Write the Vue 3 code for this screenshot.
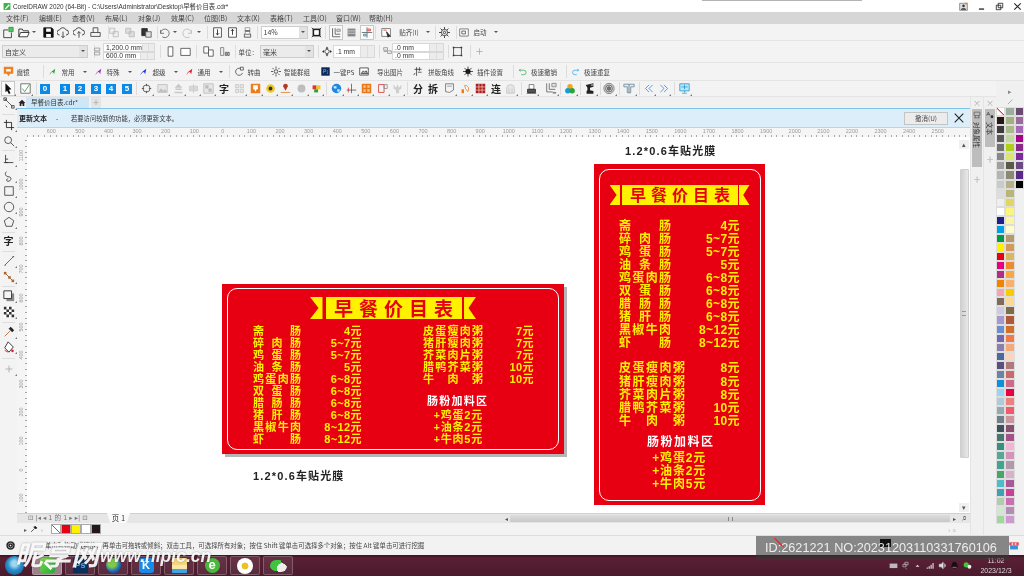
<template>
  <div class="app">
    <div class="titlebar">
      <svg class="logo" viewBox="0 0 14 14"><path d="M1 1h12v12H1z" fill="#3fb04a" /><path d="M3 11l7-8 2 2-7 7z" fill="#fff" /></svg>
      <span class="title">CorelDRAW 2020 (64-Bit) - C:\Users\Administrator\Desktop\早餐价目表.cdr*</span>
      <div class="winbtns">
        <svg viewBox="0 0 14 14"><path d="M1 2h12v11H1z" fill="#ddd" stroke="#666" /><path d="M7 4a2 2 0 1 0 .1 0M3 12c0-3 8-3 8 0" fill="#333" /><path d="M10 1h3v3h-3z" fill="#f08030" /></svg>
        <svg viewBox="0 0 14 14"><path d="M3 11h8" stroke="#222" stroke-width="2" /></svg>
        <svg viewBox="0 0 14 14"><path d="M5 2h7v7h-7zM2 5h7v7H2z" stroke="#222" stroke-width="1.3" fill="none" /></svg>
        <svg viewBox="0 0 14 14"><path d="M2 2l10 10M12 2L2 12" stroke="#222" stroke-width="1.6" /></svg>
      </div>
    </div>
    <div class="menubar">
      <span v-for="m in menus" :key="m">{{ m }}</span>
    </div>

    <div v-for="bar in topBars" :key="bar.id" class="toolbar" :class="bar.id">
      <template v-for="(it, idx) in bar.items" :key="idx">
        <i v-if="it.k === 's'" class="sep" :style="boxStyle(it)"></i>
        <span v-else-if="it.k === 'a'" class="arrow" :style="boxStyle(it)"></span>
        <span v-else-if="it.k === 't'" class="tbtext" :style="boxStyle(it)">{{ it.t }}</span>
        <span v-else-if="it.k === 'c'" class="combo" :class="{ white: it.white }" :style="boxStyle(it)">
          <em>{{ it.t }}</em><b></b>
        </span>
        <span v-else-if="it.k === 'f'" class="fields" :style="boxStyle(it)">
          <span v-for="v in it.vals" :key="v" class="field">
            <em>{{ v }}</em><b></b><b></b>
          </span>
        </span>
        <span v-else class="ico" :class="{ boxed: it.boxed }" :style="boxStyle(it)">
          <svg viewBox="0 0 14 14"><path v-for="(p, n) in icons[it.n]" :key="n" :d="p[0]" :stroke="p[1] || '#333'" :fill="p[2] || 'none'" /></svg>
        </span>
      </template>
    </div>

    <div class="workspace">
      <div class="leftpart">
        <div class="toolbar row4">
          <template v-for="(it, idx) in row4" :key="idx">
            <i v-if="it.k === 's'" class="sep" :style="boxStyle(it)"></i>
            <span v-else-if="it.k === 'n'" class="numkey" :style="boxStyle(it)">{{ it.t }}</span>
            <span v-else-if="it.k === 'g'" class="glyph" :style="boxStyle(it)">{{ it.t }}</span>
            <span v-else class="ico mark" :class="{ boxed: it.boxed }" :style="boxStyle(it)">
              <svg viewBox="0 0 14 14"><path v-for="(p, n) in icons[it.n]" :key="n" :d="p[0]" :stroke="p[1] || '#333'" :fill="p[2] || 'none'" /></svg>
            </span>
          </template>
        </div>
        <div class="midrow">
          <div class="toolbox">
            <template v-for="(it, idx) in toolbox" :key="idx">
              <i v-if="it.k === 's'" class="hsep" :style="vStyle(it)"></i>
              <span v-else-if="it.k === 'g'" class="glyph" :style="vStyle(it)">{{ it.t }}</span>
              <span v-else class="ico mark" :style="vStyle(it)">
                <svg viewBox="0 0 14 14"><path v-for="(p, n) in icons[it.n]" :key="n" :d="p[0]" :stroke="p[1] || '#333'" :fill="p[2] || 'none'" /></svg>
              </span>
            </template>
          </div>
          <div class="docarea">
            <div class="tabstrip">
              <svg class="home" viewBox="0 0 14 14"><path d="M7 2L1 8h2v5h3V9h2v4h3V8h2z" fill="#222" /></svg>
              <span class="doctab">早餐价目表.cdr*</span>
              <span class="addtab">+</span>
            </div>
            <div class="updatebar">
              <b>更新文本</b><span class="dash">-</span><span>若要访问较新的功能，必须更新文本。</span>
              <button class="cancel">撤消(U)</button>
              <svg class="closex" viewBox="0 0 14 14"><path d="M2 2l10 10M12 2L2 12" stroke="#222" stroke-width="1.3" /></svg>
            </div>
            <div class="hruler">
              <span v-for="(n, i) in hLabels" :key="i">{{ n }}</span>
            </div>
            <div class="canvasrow">
              <div class="vruler">
                <span v-for="(n, i) in vLabels" :key="i">{{ n }}</span>
              </div>
              <div class="canvas">
                <div class="label label1">1.2*0.6车贴光膜</div>
                <div class="label label2">1.2*0.6车贴光膜</div>

                <div class="board wide">
                  <div class="frame"></div>
                  <div class="banner">
                    <i class="rib left"></i><strong>早餐价目表</strong><i class="rib right"></i>
                  </div>
                  <div class="cols">
                    <div class="col first">
                      <div v-for="r in sausage" :key="r[0]" class="line"><span class="nm">{{ r[0] }}</span><span>{{ r[1] }}</span></div>
                    </div>
                    <div class="col second">
                      <div v-for="r in porridgeWide" :key="r[0]" class="line"><span class="nm">{{ r[0] }}</span><span>{{ r[1] }}</span></div>
                      <div class="extra-title">肠粉加料区</div>
                      <div v-for="e in extras" :key="e" class="extra">{{ e }}</div>
                    </div>
                  </div>
                </div>

                <div class="board tall">
                  <div class="frame"></div>
                  <div class="banner">
                    <i class="rib left"></i><strong>早餐价目表</strong><i class="rib right"></i>
                  </div>
                  <div class="list">
                    <div v-for="r in sausage" :key="r[0]" class="line"><span class="nm">{{ r[0] }}</span><span>{{ r[1] }}</span></div>
                  </div>
                  <div class="list second">
                    <div v-for="r in porridgeTall" :key="r[0]" class="line"><span class="nm">{{ r[0] }}</span><span>{{ r[1] }}</span></div>
                  </div>
                  <div class="extra-title">肠粉加料区</div>
                  <div v-for="e in extras" :key="e" class="extra">{{ e }}</div>
                </div>
              </div>
              <div class="vscroll">
                <span class="sbtn">▴</span>
                <div class="vthumb"><i></i></div>
                <span class="sbtn">▾</span>
              </div>
            </div>
            <div class="pagerow">
              <span class="pagenav">⊡ |◂ ◂ 1 的 1 ▸ ▸| ⊡</span>
              <span class="pagetab">页 1</span>
              <div class="hscroll"><span class="sarrow">◂</span><div class="hthumb"><i></i></div><span class="sarrow">▸</span><span class="mag">⌕</span></div>
            </div>
            <div class="colorrow">
              <span class="cr-arrow">▸</span>
              <svg viewBox="0 0 14 14"><path d="M2 12l6-6M7 3l4 4M9 2l3 3-2 2-3-3z" stroke="#333" stroke-width="1.4" /></svg>
              <span class="cr-left">‹</span>
              <i class="swatch none"></i>
              <i v-for="c in docColors" :key="c" class="swatch" :style="{ background: c }"></i>
              <span class="cr-right">› »</span>
            </div>
          </div>
          <div class="dockers">
            <div class="dockcol">
              <span class="dx">×</span>
              <div class="docktab one">
                <svg viewBox="0 0 14 14"><path d="M2 2h10v6H2zM4 8v4M10 8v4M2 12h10" stroke="#444" fill="none" /></svg>
                <span>对象属性</span>
              </div>
              <span class="dplus">+</span>
            </div>
            <div class="dockcol">
              <span class="dx">×</span>
              <div class="docktab two">
                <svg viewBox="0 0 14 14"><path d="M1 8l3-6 3 6M2 6h4" stroke="#333" fill="none" /><path d="M8 10a2.500 2.500 0 1 0 5 0a2.500 2.500 0 1 0-5 0" fill="#333" /></svg>
                <span>文本</span>
              </div>
              <span class="dplus">+</span>
            </div>
          </div>
        </div>
      </div>
      <div class="palette">
        <div class="palhead">
          <span>▸</span>
          <svg viewBox="0 0 14 14"><path d="M3 11l7-7" stroke="#aaa" stroke-width="1.5" /></svg>
        </div>
        <div class="palcols">
          <div v-for="(col, i) in paletteCols" :key="i" class="palcol">
            <i v-for="(c, j) in col" :key="j" :class="{ none: c === 'none' }" :style="c === 'none' ? {} : { background: c }"></i>
          </div>
        </div>
      </div>
    </div>

    <div class="statusbar">
      <svg class="gear" viewBox="0 0 14 14"><path d="M7 2.500a4.500 4.500 0 1 0 .1 0M7 5a2 2 0 1 0 .1 0" stroke="#222" stroke-width="2" fill="none" /></svg>
      <span class="tip">单击可拖动或缩放；再单击可拖转或倾斜；双击工具，可选择所有对象；按住 Shift 键单击可选择多个对象；按住 Alt 键单击可进行挖掘</span>
    </div>

    <div class="taskbar">
      <span class="orb"></span>
      <span v-for="t in taskApps" :key="t.id" class="tbtn" :class="{ active: t.active }">
        <span class="app-ico" :class="t.id">{{ t.t }}</span>
      </span>
      <div class="tray">
        <svg viewBox="0 0 14 14"><path d="M1 4h12v7H1z" fill="#bbb" /></svg>
        <svg viewBox="0 0 14 14"><path d="M6 2h5v4H6zM3 5h5v4H3z" stroke="#ccc" fill="none" /><path d="M6 12l2 1 2-1z" fill="#ddd" /></svg>
        <svg viewBox="0 0 14 14"><path d="M4 9l3-3 3 3z" fill="#ddd" /></svg>
        <svg viewBox="0 0 14 14"><path d="M1 12h2v-2H1zM4 12h2V8H4zM7 12h2V6H7zM10 12h2V3h-2z" fill="#ccc" /></svg>
        <svg viewBox="0 0 14 14"><path d="M2 5h3l3-3v10L5 9H2zM10 4c2 2 2 4 0 6" fill="#ddd" stroke="#ddd" /></svg>
        <svg viewBox="0 0 14 14"><path d="M7 1c-3 0-4 2-4 5l-2 4 2-1c1 2 2 3 4 3s3-1 4-3l2 1-2-4c0-3-1-5-4-5z" fill="#111" /><path d="M4 9h6v2H4z" fill="#e33" /></svg>
        <svg viewBox="0 0 14 14"><path d="M1 6a4 4 0 1 1 8 0a4 4 0 1 1-8 0" fill="#3ec43e" /><path d="M7 9a3 3 0 1 1 6 0a3 3 0 1 1-6 0" fill="#eee" /></svg>
        <span class="clock"><span>11:02</span><span>2023/12/3</span></span>
      </div>
    </div>

    <div class="wm">
      <span class="wm-cn">昵享网</span><span class="wm-en">www.nipic.cn</span>
    </div>
    <div class="idbox">
      <i class="none-chip"></i>
      <i class="black-chip"></i>
      <span class="id-text">ID:2621221 NO:20231203110331760106</span>
    </div>
    <svg class="redblue" viewBox="0 0 14 14"><path d="M1 3h12v4H1z" fill="#e0485a" /><path d="M2 7h10v5H2z" fill="#3a8fd8" /><path d="M4 4h2v2H4zM8 4h2v2H8z" fill="#fff" /></svg>
    <i class="topshadow"></i>
  </div>
</template>

<script setup>
const menus = ['文件(F)', '编辑(E)', '查看(V)', '布局(L)', '对象(J)', '效果(C)', '位图(B)', '文本(X)', '表格(T)', '工具(O)', '窗口(W)', '帮助(H)']

const circle = (x, y, r) => `M${x - r} ${y}a${r} ${r} 0 1 0 ${2 * r} 0a${r} ${r} 0 1 0 ${-2 * r} 0`

const icons = {
  new: [['M2 4v9h9V7M2 4h5'], ['M8 1h5v5H8z', '#2a9d3a', '#57c05f']],
  open: [['M1 12V3h4l1 2h6v2', '#222'], ['M1 12l2-5h10l-2 5z', '#222', '#fff']],
  save: [['M1 1h10l2 2v10H1z', '#111', '#111'], ['M4 2h6v4H4zM4 9h6v4H4z', 'none', '#fff']],
  cloudDown: [['M3 10a3 3 0 0 1 0-6a4 4 0 0 1 7.500 0a3 3 0 0 1 0 6'], ['M7 6v7M5 11l2 2 2-2']],
  cloudUp: [['M3 10a3 3 0 0 1 0-6a4 4 0 0 1 7.500 0a3 3 0 0 1 0 6'], ['M7 13V6M5 8l2-2 2 2']],
  print: [['M4 7V1h6v6M1 7h12v5H1z']],
  gc1: [['M2 2h6v6H2zM6 6h6v6H6z', '#bbb', '#eee']],
  gc2: [['M2 2h6v6H2zM6 6h6v6H6z', '#bbb', '#ddd']],
  paste: [['M1 2h7v9H1z', '#222', '#333'], ['M6 6h7v7H6z', '#555', '#ddd']],
  undo: [['M3 4v4h4', '#666'], ['M3 8a5 5 0 1 1 2 4', '#666']],
  redo: [['M11 4v4H7', '#bbb'], ['M11 8a5 5 0 1 0-2 4', '#bbb']],
  imp: [['M2 1h10v12H2z', '#333', '#fff'], ['M7 3v7M5 8l2 2 2-2', '#111']],
  exp: [['M2 1h10v12H2z', '#333', '#fff'], ['M7 10V3M5 5l2-2 2 2', '#111']],
  pdf: [['M3 9h8v4H3z', '#444', '#eee'], ['M4 1h6v8H4z', '#888', '#fff'], ['M4 4h6v2H4z', 'none', '#555']],
  fit: [['M2 2h10v10H2z', 'none', '#222'], ['M4 4h6v6H4z', 'none', '#fff'], ['M1 1l3 3M13 1l-3 3M1 13l3-3M13 13l-3-3', '#222']],
  snapL: [['M3 2v10h9M6 2v7h6', '#555'], ['M8 3h4v3H8z', '#999', '#ccc']],
  snapM: [['M2 2h10v10H2z', 'none', '#888'], ['M2 5h10M2 8h10', '#ddd']],
  snapC: [['M7 1v12M1 7h12', '#666'], ['M8 3h3v2H8z', '#d33'], ['M3 9h3v2H3z', '#38a']],
  snapT: [['M1 2h11v10H1z', '#666', '#fff'], ['M7 6l5 6-2-1-1 2z', '#222', '#222'], ['M3 4h4', '#d33']],
  gear: [[circle(7, 7, 4), '#222'], [circle(7, 7, 1.5), '#222'], ['M7 0v3M7 11v3M0 7h3M11 7h3M2 2l2 2M12 2l-2 2M2 12l2-2M12 12l-2-2', '#222']],
  start: [['M1 2h12v10H1z', '#555', '#fff'], ['M4 5h5v4H4z', '#333']],
  wh: [['M1 1h9v5H1z', '#777', '#eee'], ['M1 8h9v5H1z', '#777', '#eee']],
  portrait: [['M4 1h6v12H4z', '#444', '#fff']],
  landscape: [['M1 3h12v9H1z', '#444', '#fff']],
  pgAll: [['M1 1h6v8H1z', '#444', '#fff'], ['M7 5h6v8H7z', '#444', '#fff']],
  pgCur: [['M2 2h4v10H2z', '#777', '#eee'], ['M8 8h2v4H8zM11 8h2v4h-2z', '#555', '#ddd']],
  nudge: [[circle(7, 7, 3), '#333'], ['M7 0l2 3H5zM7 14l2-3H5zM0 7l3 2V5zM14 7l-3 2V5z', 'none', '#333']],
  dup: [['M1 1h6v4H1z', '#777'], ['M7 6h6v4H7z', '#777'], ['M1 7h5', '#777']],
  frame: [['M2 2h10v10H2z', '#333'], ['M1 1h2v2H1zM11 1h2v2h-2zM1 11h2v2H1zM11 11h2v2h-2z', 'none', '#333']],
  plus: [['M7 3v8M3 7h8', '#aaa']],
  magic: [['M1 1h12v9H9l-2 3-2-3H1z', 'none', '#f08020'], ['M4 4h6v3H4z', 'none', '#fff']],
  rGreen: [['M2 9l9-7-2 10-2-4z', 'none', '#2aa43c'], ['M1 12l3-3', '#2aa43c']],
  rPurple: [['M2 9l9-7-2 10-2-4z', 'none', '#a030c8'], ['M1 12l3-3', '#a030c8']],
  rBlue: [['M2 9l9-7-2 10-2-4z', 'none', '#1a3ad8'], ['M1 12l3-3', '#1a3ad8']],
  rRed: [['M2 9l9-7-2 10-2-4z', 'none', '#e01a2a'], ['M1 12l3-3', '#e01a2a']],
  curve: [['M11 4a5 5 0 1 0 1 5'], ['M9 1h4v4H9z', '#333', '#fff']],
  spark: [[circle(7, 7, 2.5), '#222'], ['M7 0v3M7 11v3M0 7h3M11 7h3M2 2l2 2M12 2l-2 2M2 12l2-2M12 12l-2-2', '#222']],
  ps: [['M1 1h12v12H1z', '#0a2a5a', '#0a2a5a'], ['M4 10V4h3v3H4M9 6h2M9 8h2M9 10h2', '#5ab0ee']],
  picOut: [['M1 2h12v10H1z', '#222', '#fff'], ['M3 10l3-4 2 2 2-2 2 4z', '#222', '#bbb']],
  cornerCut: [['M5 1v12M2 4h10M9 1v5M7 8h5', '#222'], ['M3 9l-2 3', '#222']],
  gearB: [[circle(7, 7, 3.2), '#111', '#111'], [circle(7, 7, 1.2), 'none', '#fff'], ['M7 0v14M0 7h14M2 2l10 10M12 2L2 12', '#111']],
  undoG: [['M4 3L2 5l2 2M2 5h7a3 3 0 0 1 0 7H5', '#23a03a']],
  redoB: [['M10 3l2 2-2 2M12 5H6a3 3 0 0 0 0 7h3', '#1e9ae8']],
  sel: [['M4 1l7 7-3 .500 2 4-2 1-2-4-2 2z', 'none', '#111']],
  check: [['M1 1h12v12H1z', '#555', '#fff'], ['M3 7l3 4 6-9', '#1ea03a']],
  ring: [[circle(7, 7, 4.5), '#444'], ['M7 1v3M7 10v3M1 7h3M10 7h3', '#444']],
  greyImg: [['M1 2h12v10H1z', '#bbb', '#e6e6e6'], ['M2 11l3-4 3 3 2-2 3 3z', 'none', '#bbb']],
  greyA: [['M7 1l5 5H2zM3 7h8v2H3zM2 11h10v2H2z', 'none', '#c8c8c8']],
  greyB: [['M2 4h10v6H2zM7 1v12', '#c8c8c8', '#d8d8d8']],
  greyC: [['M1 1h12v12H1z', '#bbb', '#e6e6e6'], ['M3 3h4v4H3zM7 7h4v4H7z', 'none', '#bbb']],
  greyD: [['M2 2h4v4H2zM8 2h4v4H8zM2 8h4v4H2zM8 8h4v4H8z', '#c4c4c4', '#e8e8e8']],
  orange: [['M1 1h12v12H1z', 'none', '#ef7d1a'], ['M4 3h6v5H8.500L7 11 5.500 8H4z', 'none', '#fff']],
  eye: [[circle(7, 7, 5.5), 'none', '#f0c81a'], [circle(7, 7, 2.5), 'none', '#333']],
  under: [['M7 1a3 3 0 0 1 3 3l-3 6-3-6a3 3 0 0 1 3-3z', 'none', '#b03a2a'], ['M1 12h12', '#e8781a']],
  greyDot: [[circle(7, 7, 5), 'none', '#bdbdbd']],
  multi: [['M2 3h5v5H2z', 'none', '#e0342a'], ['M7 3h5v5H7z', 'none', '#f0c81a'], ['M4 8h5v4H4z', 'none', '#2aa43c']],
  globe: [[circle(7, 7, 6), 'none', '#1e88e0'], ['M3 4h4v3H4zM8 8h3v3H8z', 'none', '#cfeaff']],
  cross: [['M7 1v12M1 9h12', '#555'], ['M3 6v6', '#d33']],
  pattern: [['M1 1h12v12H1z', 'none', '#e8761a'], ['M3 3h3v3H3zM8 3h3v3H8zM3 8h3v3H3zM8 8h3v3H8z', 'none', '#f8c090']],
  redCorner: [['M2 2h7v10H2z', '#d33'], ['M9 2h4v5H9z', '#888']],
  greyCrown: [['M2 2l3 4 2-4 2 4 3-4v5l-3 2v4H5V9L2 7z', 'none', '#cfcfcf']],
  doc: [['M2 1h10v8l-5 3-5-1z', '#666', '#f4f4f4'], ['M4 4h6', '#888']],
  peel: [['M2 8h3v5H2z', 'none', '#e8761a'], ['M6 3c4 0 6 3 4 8l-3-4z', '#e8761a', '#fff']],
  redGrid: [['M1 1h12v12H1z', 'none', '#a81c1c'], ['M5 1v12M9 1v12M1 5h12M1 9h12', '#f3c0b8']],
  greyArch: [['M2 13V7a5 5 0 0 1 10 0v6zM5 13V7M9 13V7', '#c4c4c4', '#e6e6e6']],
  printer: [['M4 2h6v6H4z', '#666', '#fff'], ['M2 8h10v4H2z', '#222', '#555'], ['M1 13h12', '#222']],
  ell: [['M2 1v10h7M5 1v7h7', '#666'], ['M8 1h5v4H8z', '#888', '#ddd'], ['M9 11h4v2H9z', 'none', '#888']],
  tri: [[circle(7, 5, 3.2), 'none', '#f0a81a'], [circle(4.5, 9.5, 3.2), 'none', '#1e98d8'], [circle(9.5, 9.5, 3.2), 'none', '#2aa43c']],
  anvil: [['M2 3l9-2v4L7 6v3l4 1v3H3v-3l1-1V6z', 'none', '#222'], ['M8 3h3', '#fff']],
  target: [[circle(7, 7, 6), '#777', '#ddd'], [circle(7, 7, 4), '#555'], [circle(7, 7, 2), '#555', '#777']],
  tee: [['M1 2h12v3H9v7H5V5H1z', '#6a8a9a', '#e8eef0'], ['M7 2v10', '#5a7a8a']],
  prev: [['M7 2L2 7l5 5M12 2L7 7l5 5', '#1e78e8']],
  next: [['M2 2l5 5-5 5M7 2l5 5-5 5', '#1e78e8']],
  monitor: [['M1 1h12v9H1z', '#1e98d8', '#bfe6f8'], ['M7 10v2M4 13h6M3 5h8M7 2v6', '#1e98d8']],
  shape: [['M2 2l9 9', '#444'], ['M1 1h3v3H1zM10 10h3v3h-3zM3 10l2 2', '#444']],
  crop: [['M4 1v9h9M1 4h9v9', '#222']],
  zoom: [[circle(6, 6, 4), '#444'], ['M9 9l4 4', '#444']],
  free: [['M3 1v9h9', '#333'], ['M1 10h5M3 6h3', '#333']],
  spiral: [['M4 2c-3 3 0 6 3 6s3 4 0 5-4-2-1-3', '#333']],
  rect: [['M2 2h10v10H2z', '#444']],
  ellipse: [[circle(7, 7, 5.5), '#444']],
  poly: [['M7 1.500l5.500 4-2 6.500h-7l-2-6.500z', '#444']],
  line: [['M2 12L12 2', '#555'], ['M2 12h1M11 2h2', '#333']],
  conn: [['M2 2l10 10', '#664'], ['M1 1h3v3H1z', 'none', '#b5622a'], ['M6 6h3v3H6z', 'none', '#b5622a'], ['M10 10h3v3h-3z', 'none', '#b5622a']],
  shadow: [['M4 4h9v9H4z', 'none', '#888'], ['M1 1h9v9H1z', '#222', '#f4f4f4']],
  check2: [['M1 1h12v12H1z', 'none', '#fff'], ['M1 1h3v3H1zM7 1h3v3H7zM4 4h3v3H4zM10 4h3v3h-3zM1 7h3v3H1zM7 7h3v3H7zM4 10h3v3H4zM10 10h3v3h-3z', 'none', '#333']],
  dropper: [['M2 12l6-6', '#b5622a'], ['M7 3l4 4', '#222'], ['M9 1l4 4-2 2-4-4z', 'none', '#222']],
  fill: [['M6 1l6 6-5 6-5-5z', '#222', '#fff'], ['M2 11l4 2', '#e01a2a'], ['M11 10a1.500 1.500 0 1 0 .1 0', 'none', '#e01a2a']]
}

const I = (n, x, w = 12, boxed = false) => ({ k: 'i', n, x, w, boxed })
const S = x => ({ k: 's', x, w: 1 })
const A = x => ({ k: 'a', x, w: 7 })
const T = (t, x, w) => ({ k: 't', t, x, w })
const C = (t, x, w, white = false) => ({ k: 'c', t, x, w, white })
const F = (vals, x, w) => ({ k: 'f', vals, x, w })
const N = (t, x) => ({ k: 'n', t, x, w: 10 })
const G = (t, x, w = 14) => ({ k: 'g', t, x, w })

// turn absolute centres into flow margins
const flow = list => {
  let right = 0
  return list.map(it => {
    const l = it.x - it.w / 2
    const out = { ...it, ml: l - right }
    right = l + it.w
    return out
  })
}

const topBars = [
  {
    id: 'row1',
    items: flow([
      I('new', 8), I('open', 24), A(34), I('save', 48, 11), I('cloudDown', 63), I('cloudUp', 79), I('print', 95, 11), S(108),
      I('gc1', 114), I('gc2', 130), I('paste', 146, 11), S(157), I('undo', 164), A(175), I('redo', 188), A(199), S(207),
      I('imp', 217, 11), I('exp', 232, 11), I('pdf', 247, 11), S(257), C('14%', 284, 47, true), I('fit', 316, 11), S(325),
      I('snapL', 336, 12, true), I('snapM', 351, 11), I('snapC', 367, 12, true), S(375), I('snapT', 386, 11), T('贴齐(I)', 409, 24), A(428), S(435),
      I('gear', 444, 11), S(456), I('start', 464, 10), T('启动', 480, 15), A(496)
    ])
  },
  {
    id: 'row2',
    items: flow([
      C('自定义', 45, 86), S(94), I('wh', 98, 8), F(['1,200.0 mm', '600.0 mm'], 129, 52), S(160), I('portrait', 170, 11), I('landscape', 185, 11), S(196),
      I('pgAll', 208, 11), I('pgCur', 224, 11), S(235), T('单位：', 248, 19), C('毫米', 287, 54), S(318), I('nudge', 327, 10), F(['.1 mm'], 354, 42), S(379),
      I('dup', 387, 9), F(['.0 mm', '.0 mm'], 418, 52), S(448), I('frame', 457, 11), S(470), I('plus', 479, 11)
    ])
  },
  {
    id: 'row3',
    items: flow([
      I('magic', 8, 11), T('魔镜', 23, 15), S(43), I('rGreen', 53, 8), T('常用', 68, 15), A(85), I('rPurple', 99, 8), T('特殊', 113, 15), A(130),
      I('rBlue', 144, 8), T('超级', 159, 15), A(176), I('rRed', 190, 8), T('通用', 204, 15), A(221), S(229),
      I('curve', 239, 10), T('转曲', 254, 15), I('spark', 276, 10), T('智能群组', 297, 28), I('ps', 325, 9), T('一键PS', 344, 22),
      I('picOut', 364, 10), T('导出图片', 390, 28), I('cornerCut', 418, 10), T('拼版角线', 441, 28), I('gearB', 468, 10), T('插件设置', 490, 28), S(513),
      I('undoG', 522, 9), T('极速撤销', 544, 28), S(566), I('redoB', 575, 9), T('极速重复', 597, 28)
    ])
  }
]

const row4 = flow([
  I('sel', 8, 12, true), I('check', 25, 11), S(36), N('0', 45), N('1', 65), N('2', 80), N('3', 96), N('4', 111), N('5', 127), S(136),
  I('ring', 146, 11), I('greyImg', 162, 11), I('greyA', 178, 11), I('greyB', 193, 11), I('greyC', 208, 11), G('字', 224), I('greyD', 239, 11),
  I('orange', 255, 11), I('eye', 270, 11), I('under', 285, 11), I('greyDot', 301, 11), I('multi', 316, 11), S(326), I('globe', 336, 11), I('cross', 351, 11),
  I('pattern', 366, 11), I('redCorner', 382, 11), I('greyCrown', 397, 11), S(407), G('分', 418), G('拆', 433), I('doc', 449, 11), I('peel', 465, 11),
  I('redGrid', 480, 11), G('连', 496), I('greyArch', 510, 11), S(521), I('printer', 531, 11), I('ell', 551, 12), S(560), I('tri', 570, 12), S(580), I('anvil', 590, 12), S(600),
  I('target', 609, 12), S(619), I('tee', 629, 12), S(639), I('prev', 649, 10), I('next', 664, 10), S(674), I('monitor', 684, 11)
])

const V = (n, y) => ({ n, y, h: 12 })
const VS = y => ({ k: 's', y, h: 1 })
const VG = (t, y) => ({ k: 'g', t, y, h: 14 })

const vflow = (list, start) => {
  let bottom = start
  return list.map(it => {
    const t = it.y - it.h / 2
    const out = { ...it, mt: t - bottom }
    bottom = t + it.h
    return out
  })
}

const toolbox = vflow([
  V('shape', 103), VS(114), V('crop', 125), V('zoom', 141), VS(150), V('free', 160), V('spiral', 176), V('rect', 191), V('ellipse', 207), V('poly', 222), VS(232),
  VG('字', 241), VS(251), V('line', 261), V('conn', 277), VS(286), V('shadow', 296), V('check2', 312), VS(322), V('dropper', 332), V('fill', 347), VS(358), V('plus', 369)
], 97)

const boxStyle = it => ({ width: it.w + 'px', marginLeft: it.ml + 'px' })
const vStyle = it => ({ height: it.h + 'px', marginTop: it.mt + 'px' })

const hLabels = ['600', '500', '400', '300', '200', '100', '0']
for (let i = 100; i <= 2500; i += 100) hLabels.push(String(i))
const vLabels = ['1100', '1000', '900', '800', '700', '600', '500', '400', '300', '200', '100', '0', '100']

const sausage = [
  ['斋肠', '4元'], ['碎肉肠', '5~7元'], ['鸡蛋肠', '5~7元'], ['油条肠', '5元'], ['鸡蛋肉肠', '6~8元'],
  ['双蛋肠', '6~8元'], ['腊肠肠', '6~8元'], ['猪肝肠', '6~8元'], ['黑椒牛肉', '8~12元'], ['虾肠', '8~12元']
]
const porridgeWide = [['皮蛋瘦肉粥', '7元'], ['猪肝瘦肉粥', '7元'], ['芥菜肉片粥', '7元'], ['腊鸭芥菜粥', '10元'], ['牛肉粥', '10元']]
const porridgeTall = [['皮蛋瘦肉粥', '8元'], ['猪肝瘦肉粥', '8元'], ['芥菜肉片粥', '8元'], ['腊鸭芥菜粥', '10元'], ['牛肉粥', '10元']]
const extras = ['+鸡蛋2元', '+油条2元', '+牛肉5元']

const docColors = ['#e60012', '#fff100', '#ffffff', '#231815']

const paletteCols = [
  ['none', '#231815', '#3e3a39', '#595757', '#727171', '#898989', '#9fa0a0', '#b5b5b6', '#c9caca', '#dcdddd', '#efefef', '#ffffff', '#1d2088', '#00a0e9', '#009944', '#fff100', '#e60012', '#e4007f', '#b22e86', '#f08300', '#f4a6b0', '#7f6b5c', '#cfc8e6', '#a399cf', '#6a8fd0', '#7367b0', '#8b7fae', '#4a6a9f', '#5b4f7b', '#6b84a6', '#0f90dc', '#99d3f5', '#aecbdc', '#93aab5', '#707f8a', '#3f4f5b', '#47766f', '#36907b', '#56a796', '#40a58f', '#47a56b', '#4dbdc9', '#3da3b3', '#b0cdb0', '#d0e8d0', '#a0d6a0'],
  ['#9bad9b', '#a3b07e', '#a8b98a', '#c3d69b', '#aed116', '#dbe66e', '#5a5a48', '#8a8a72', '#b5b08a', '#b8b47a', '#e0d660', '#fdf57a', '#fdf5a6', '#fffbd0', '#b59a70', '#d39a5c', '#d8b860', '#f08a30', '#f8a840', '#f8b06c', '#f8cc00', '#fad89a', '#7d6b4a', '#b0583a', '#d0702a', '#f07a48', '#f4a87c', '#fad4bc', '#b07878', '#cc6a6a', '#cc6a88', '#e60044', '#f08080', '#f05a6a', '#cc949c', '#885070', '#a85088', '#f4b4d4', '#d494b8', '#b09aa8', '#d8b0cc', '#a85a98', '#c84098', '#c870b0', '#b48cb8', '#cc9ad0'],
  ['#6a4a70', '#9a6a9a', '#a868b8', '#a8008a', '#8a2a88', '#7a2a9a', '#6a4a80', '#5a2a88', '#000000']
]

const taskApps = [
  { id: 'cdr', t: '', active: true },
  { id: 'psa', t: 'Ps' },
  { id: 'earth', t: '' },
  { id: 'kk', t: 'K' },
  { id: 'folder', t: '' },
  { id: 'ie', t: 'e' },
  { id: 'badge', t: '' },
  { id: 'wechat', t: '' }
]
</script>

<style>
html, body { margin: 0; padding: 0; background: #f3f3f3; overflow: hidden; }
</style>

<style scoped>
.app {
  width: 1024px;
  height: 576px;
  position: relative;
  overflow: hidden;
  display: flex;
  flex-direction: column;
  font-family: "Noto Sans CJK SC", "Liberation Sans", sans-serif;
  font-size: 7px;
  color: #444;
  background: #f3f3f3;
  filter: blur(.3px);
}
.titlebar {
  height: 12px;
  flex: none;
  background: #fff;
  display: flex;
  align-items: center;
  padding-left: 3px;
}
.logo { width: 8px; height: 9px; margin-right: 2px; }
.title { font-family: "Liberation Sans", "Noto Sans CJK SC", sans-serif; font-size: 6.400px; color: #333; }
.winbtns { margin-left: auto; display: flex; padding-right: 2px; }
.winbtns svg { width: 9px; height: 9px; margin-left: 9px; }
.menubar {
  height: 12px;
  flex: none;
  background: #d6d6d6;
  display: flex;
  align-items: center;
  padding-left: 6px;
  gap: 10.500px;
  color: #444;
  font-size: 7px;
}
.menubar span { width: 22.500px; white-space: nowrap; }
.toolbar {
  flex: none;
  display: flex;
  align-items: center;
  background: #f3f3f3;
  border-bottom: 1px solid #e4e4e4;
  box-sizing: border-box;
}
.row1 { height: 17px; }
.row2 { height: 22px; }
.row3 { height: 18px; }
.row4 { height: 16px; }
.sep { flex: none; height: 13px; background: #dcdcdc; }
.arrow { flex: none; height: 8px; position: relative; }
.arrow::after {
  content: "";
  position: absolute;
  left: 1.500px;
  top: 3px;
  border: 2px solid transparent;
  border-top: 2.500px solid #555;
}
.tbtext { flex: none; white-space: nowrap; text-align: center; font-size: 6.500px; color: #444; }
.ico { flex: none; height: 13px; display: flex; align-items: center; justify-content: center; position: relative; }
.ico svg { width: 100%; height: 100%; stroke-width: 1; fill: none; }
.boxed { outline: 1px solid #c8c8c8; background: #fafafa; }
.mark::after {
  content: "";
  position: absolute;
  right: -2px;
  bottom: -1px;
  border: 1px solid transparent;
  border-right-color: #777;
  border-bottom-color: #777;
}
.combo {
  flex: none;
  height: 13px;
  box-sizing: border-box;
  border: 1px solid #cdcdcd;
  background: #ebebeb;
  display: flex;
  align-items: center;
  padding-left: 2px;
  font-size: 7px;
}
.combo.white { background: #fff; }
.combo em { flex: 1; font-style: normal; white-space: nowrap; }
.combo b { width: 8px; height: 100%; background: #e2e2e2; position: relative; }
.combo b::after {
  content: "";
  position: absolute;
  left: 2px;
  top: 4px;
  border: 2px solid transparent;
  border-top: 2.500px solid #555;
}
.fields { flex: none; display: flex; flex-direction: column; }
.field {
  display: flex;
  height: 8.500px;
  box-sizing: border-box;
  border: 1px solid #d8d8d8;
  background: #fff;
  align-items: center;
  font-size: 6.800px;
  line-height: 7px;
  padding-left: 2px;
  overflow: hidden;
}
.field em { flex: 1; font-style: normal; white-space: nowrap; font-family: "Liberation Sans", sans-serif; color: #333; }
.field b { width: 6px; height: 100%; background: #ececec; border-left: 1px solid #ddd; }
.row2 .fields .field:only-child { height: 13px; }
.numkey {
  flex: none;
  height: 10px;
  background: #0a8ae6;
  color: #fff;
  text-align: center;
  font: bold 8px/10px "Liberation Sans", sans-serif;
}
.glyph { flex: none; font-weight: 700; font-size: 10px; line-height: 14px; height: 14px; text-align: center; color: #222; }

.workspace { flex: none; height: 454px; display: flex; }
.leftpart { width: 996px; display: flex; flex-direction: column; }
.row4 { width: 996px; }
.midrow { flex: 1; display: flex; min-height: 0; }
.toolbox { width: 17px; flex: none; display: flex; flex-direction: column; align-items: center; background: #f3f3f3; }
.toolbox .ico { width: 12px; flex: none; }
.hsep { flex: none; width: 13px; background: #dedede; }

.docarea { width: 953px; flex: none; display: flex; flex-direction: column; }
.tabstrip {
  height: 12px;
  box-sizing: border-box;
  border-bottom: 1px solid #7cc4ea;
  display: flex;
  align-items: stretch;
  background: #f1f1f1;
  flex: none;
}
.home { width: 8px; height: 9px; margin: 1px 0 0 1px; }
.doctab { width: 63px; background: #cfe6f7; font-size: 6.500px; color: #333; padding-left: 5px; box-sizing: border-box; line-height: 11px; white-space: nowrap; }
.addtab { width: 10px; margin-left: 2px; background: #e4e4e4; color: #aaa; text-align: center; font-size: 10px; line-height: 10px; }
.updatebar {
  height: 18px;
  flex: none;
  background: #ddeefb;
  display: flex;
  align-items: center;
  padding-left: 2px;
  color: #333;
  font-size: 6.300px;
  position: relative;
}
.updatebar b { width: 37px; font-weight: 700; color: #222; font-size: 7px; }
.dash { width: 15px; }
.cancel {
  margin-left: auto;
  margin-right: 5px;
  width: 44px;
  height: 13px;
  padding: 0;
  border: 1px solid #c4c4c4;
  background: #ececec;
  font: 6.500px "Noto Sans CJK SC", sans-serif;
  color: #444;
}
.closex { width: 12px; height: 12px; margin-right: 5px; }
.hruler {
  height: 10px;
  flex: none;
  box-sizing: border-box;
  padding-left: 20px;
  border-top: 1px solid #cfcfcf;
  display: flex;
  background:
    repeating-linear-gradient(90deg, #aaa 0 1px, transparent 1px 5.720px) 10px 100% / 100% 2px no-repeat,
    #f5f5f5;
  overflow: hidden;
}
.hruler span { width: 28.600px; flex: none; font-size: 5.500px; line-height: 7px; color: #999; text-align: center; font-family: "Liberation Sans", sans-serif; }
.canvasrow { flex: 1; display: flex; min-height: 0; }
.vruler {
  width: 10px;
  flex: none;
  display: flex;
  flex-direction: column;
  padding-top: 4px;
  box-sizing: border-box;
  overflow: hidden;
  background:
    repeating-linear-gradient(0deg, #aaa 0 1px, transparent 1px 5.720px) 100% 0 / 2px 100% no-repeat,
    #f5f5f5;
}
.vruler span {
  height: 28.600px;
  flex: none;
  writing-mode: vertical-rl;
  transform: rotate(180deg);
  font-size: 5.500px;
  line-height: 8px;
  color: #999;
  text-align: center;
  font-family: "Liberation Sans", sans-serif;
}
.canvas { flex: 1; background: #fff; position: relative; overflow: hidden; }
.vscroll {
  width: 12px;
  flex: none;
  background: #fff;
  display: flex;
  flex-direction: column;
  align-items: center;
  color: #555;
  font-size: 7px;
}
.sbtn { height: 9px; line-height: 9px; margin-top: 3px; background: #f0f0f0; width: 10px; text-align: center; }
.vthumb {
  width: 9px;
  height: 289px;
  margin-top: 20px;
  margin-bottom: 42px;
  border-radius: 1px;
  background: linear-gradient(90deg, #d0d0d0, #e8e8e8);
  border: 1px solid #cfcfcf;
  box-sizing: border-box;
  display: flex;
  align-items: center;
  justify-content: center;
}
.vthumb i { width: 4px; height: 3px; border-top: 1px solid #999; border-bottom: 1px solid #999; }
.pagerow {
  height: 9px;
  flex: none;
  display: flex;
  align-items: stretch;
  background: #e6e6e6;
  border-top: 1px solid #d0d0d0;
  font-size: 7px;
  color: #777;
}
.pagenav { margin-left: 11px; width: 79px; line-height: 8px; white-space: nowrap; font-family: "DejaVu Sans", "Noto Sans CJK SC", sans-serif; font-size: 6.500px; }
.pagetab { width: 23px; background: #fafafa; margin-top: -1px; text-align: center; line-height: 10px; color: #333; font-size: 7.500px; clip-path: polygon(0 0, 100% 0, 85% 100%, 15% 100%); }
.hscroll { flex: 1; margin-left: 372px; display: flex; align-items: center; font-size: 6px; color: #555; }
.sarrow { width: 8px; text-align: center; }
.hthumb { flex: 1; height: 7px; border-radius: 1px; background: linear-gradient(#dcdcdc, #c8c8c8); display: flex; align-items: center; justify-content: center; }
.hthumb i { width: 3px; height: 4px; border-left: 1px solid #888; border-right: 1px solid #888; }
.mag { width: 12px; text-align: center; font-size: 9px; font-family: "DejaVu Sans", sans-serif; line-height: 7px; }
.colorrow {
  height: 12px;
  flex: none;
  display: flex;
  align-items: center;
  background: #f3f3f3;
  color: #666;
}
.colorrow svg { width: 8px; height: 8px; margin-left: 3px; }
.cr-arrow { margin-left: 7px; font-size: 6px; font-family: "DejaVu Sans", sans-serif; }
.cr-left { margin-left: 3px; width: 10px; color: #aaa; }
.swatch { width: 8px; height: 8px; border: .5px solid #aaa; flex: none; box-sizing: content-box; }
.swatch.none { background: linear-gradient(to top right, #fff 45%, #e33 46% 54%, #fff 55%); }
.cr-right { margin-left: auto; margin-right: 14px; color: #bbb; font-size: 8px; }
.dockers { flex: 1; display: flex; background: #f0f0f0; }
.dockcol { width: 13px; display: flex; flex-direction: column; align-items: center; color: #aaa; border-left: 1px solid #e4e4e4; box-sizing: border-box; }
.dx { height: 12px; line-height: 12px; font-size: 8px; }
.docktab {
  width: 10px;
  background: #bdbdbd;
  color: #333;
  display: flex;
  flex-direction: column;
  align-items: center;
  font-size: 6.500px;
  box-sizing: border-box;
  padding-top: 2px;
}
.docktab svg { width: 8px; height: 8px; flex: none; margin-bottom: 3px; }
.docktab span { writing-mode: vertical-rl; text-orientation: sideways; line-height: 10px; white-space: nowrap; }
.docktab.one { height: 58px; }
.docktab.two { height: 38px; }
.dplus { font-size: 12px; color: #bbb; margin-top: 3px; }

.palette { width: 28px; flex: none; display: flex; flex-direction: column; background: #f0f0f0; }
.palhead { height: 26px; flex: none; display: flex; flex-direction: column; align-items: center; color: #888; font-size: 7px; padding-top: 5px; box-sizing: border-box; }
.palhead svg { width: 9px; height: 9px; margin-top: 1px; }
.palcols { display: flex; }
.palcol { width: 9.330px; display: flex; flex-direction: column; }
.palcol i { height: 9.070px; flex: none; display: block; box-sizing: border-box; border: .5px solid #ddd; }
.palcol i.none { background: linear-gradient(to top right, #fff 42%, #e33 44% 54%, #fff 56%); }

.statusbar { height: 20px; flex: none; display: flex; align-items: center; background: #f2f2f2; border-top: 1px solid #ddd; box-sizing: border-box; }
.gear { width: 11px; height: 11px; margin-left: 5px; }
.tip { margin-left: 29px; font-size: 6.400px; color: #444; white-space: nowrap; }

.taskbar {
  height: 21px;
  flex: none;
  display: flex;
  align-items: center;
  background: linear-gradient(#3a1420 0, #5a2034 3px, #4a1a2c 100%);
  position: relative;
}
.orb {
  width: 19px;
  height: 19px;
  margin-left: 5px;
  margin-right: 8px;
  border-radius: 50%;
  background: radial-gradient(circle at 50% 40%, #9ed7f0 0 18%, #2a90cc 45%, #0f4e88 100%);
  flex: none;
}
.tbtn {
  width: 30px;
  height: 19px;
  margin-right: 3px;
  flex: none;
  box-sizing: border-box;
  border: 1px solid rgba(255, 255, 255, .22);
  border-radius: 2px;
  background: rgba(255, 255, 255, .08);
  display: flex;
  align-items: center;
  justify-content: center;
}
.tbtn.active { background: rgba(255, 255, 255, .45); }
.app-ico {
  width: 15px;
  height: 15px;
  display: block;
  text-align: center;
  font: bold 9px/15px "Liberation Sans", sans-serif;
  color: #fff;
}
.cdr { background: linear-gradient(135deg, #7fdc4a, #25a838); border-radius: 3px; position: relative; overflow: hidden; }
.cdr::after { content: ""; position: absolute; left: 3px; top: 6px; width: 10px; height: 3px; background: #fff; transform: rotate(45deg); }
.psa { background: #0a2f5c; color: #4ab0f0; border-radius: 1px; }
.earth { border-radius: 50%; background: radial-gradient(circle at 40% 35%, #7ec84a 0 30%, #1a68c0 60%, #0b3a80); }
.kk { background: #1a8ae8; border-radius: 3px; font-size: 11px; }
.folder { background: linear-gradient(#f6d878 0 45%, #f8e8b0 45% 70%, #3fa4e0 70%); border-radius: 1px; }
.ie { border-radius: 50%; background: #4ab83a; font-size: 13px; line-height: 13px; }
.badge { border-radius: 50%; background: radial-gradient(circle, #f0c020 0 30%, #fff 32%); height: 16px; width: 16px; }
.wechat { width: 17px; height: 12px; border-radius: 7px; background: radial-gradient(circle at 70% 70%, #eee 0 34%, transparent 36%), radial-gradient(circle at 34% 38%, #3ec43e 0 46%, transparent 48%); }
.tray { margin-left: auto; display: flex; align-items: center; padding-right: 9px; }
.tray svg { width: 9px; height: 9px; margin-left: 3.300px; flex: none; }
.clock { display: flex; flex-direction: column; align-items: center; margin-left: 5.500px; color: #ddd; font: 7px/9.500px "Liberation Sans", sans-serif; width: 38px; }

.label {
  position: absolute;
  font: bold 11px/14px "Liberation Sans", "Noto Sans CJK SC", sans-serif;
  letter-spacing: 1.150px;
  color: #222;
  white-space: nowrap;
}
.label1 { left: 226px; top: 332px; }
.label2 { left: 598px; top: 7px; }
.board {
  position: absolute;
  box-sizing: border-box;
  background: #e60012;
  color: #fff100;
  font-weight: 700;
  font-family: "Liberation Sans", "Noto Sans CJK SC", sans-serif;
}
.frame {
  position: absolute;
  border: 1px solid #fff;
  border-radius: 10px;
  box-sizing: border-box;
}
.banner { display: flex; justify-content: center; }
.banner strong {
  display: block;
  background: #fff100;
  color: #e60012;
  font-family: "Noto Sans CJK SC", sans-serif;
  font-weight: 700;
  text-align: center;
}
.rib { display: block; flex: none; background: #fff100; }
.rib.left { clip-path: polygon(0 0, 100% 0, 100% 100%, 0 100%, 68% 50%); }
.rib.right { clip-path: polygon(0 0, 100% 0, 40% 50%, 100% 100%, 0 100%); }
.line { display: flex; justify-content: space-between; white-space: nowrap; }
.nm { display: block; text-align: justify; text-align-last: justify; }
.extra { text-align: right; white-space: nowrap; }
.extra-title { color: #fff; text-align: justify; text-align-last: justify; white-space: nowrap; }

.board.wide {
  left: 195px;
  top: 147px;
  width: 342px;
  height: 170px;
  padding: 13px 0 0 31px;
  box-shadow: 3px 3px 0 #b5b5b5;
  font-size: 11px;
  line-height: 12px;
}
.wide .frame { left: 5px; right: 5px; top: 4px; bottom: 4px; }
.wide .banner { margin-left: -31px; height: 22px; }
.wide .banner strong { width: 136px; margin: 0 2px 0 3px; font-size: 19px; line-height: 21px; letter-spacing: 6px; padding-left: 6px; box-sizing: border-box; }
.wide .rib { width: 12.500px; }
.cols { display: flex; gap: 61px; margin-top: 6px; }
.col.first { width: 109px; }
.col.second { width: 111px; }
.line span:last-child { letter-spacing: .4px; }
.wide .first .nm { width: 48px; }
.wide .second .nm { width: 60px; }
.wide .extra-title { width: 60px; margin: 10px 0 2px 4px; }
.wide .extra { width: 60px; letter-spacing: .8px; }

.board.tall {
  left: 567px;
  top: 27px;
  width: 171px;
  height: 341px;
  padding: 21px 0 0 25px;
  font-size: 12px;
  line-height: 13.100px;
}
.tall .frame { left: 5px; right: 4px; top: 5px; bottom: 4px; }
.tall .banner { margin-left: -25px; height: 20px; }
.tall .banner strong { width: 116px; margin: 0 1px 0 2px; font-size: 16px; line-height: 19px; letter-spacing: 5px; padding-left: 5px; box-sizing: border-box; }
.tall .rib { width: 10.500px; }
.list { width: 121px; margin-top: 14.500px; }
.list .nm { width: 52px; }
.list.second { margin-top: 12px; }
.list.second .nm { width: 66px; }
.tall .extra-title { width: 66px; margin: 8px 0 3px 28px; }
.tall .extra { width: 87px; letter-spacing: .8px; }

.wm {
  position: absolute;
  left: 15px;
  top: 534px;
  display: flex;
  align-items: center;
  color: rgba(255, 255, 255, .92);
  font-weight: 700;
  font-style: italic;
  text-shadow: 0 0 2px rgba(0, 0, 0, .35);
  white-space: nowrap;
}
.wm-cn { font-size: 28px; line-height: 32px; width: 85px; flex: none; }
.wm-en { font: italic bold 17.500px/32px "Liberation Sans", sans-serif; margin-top: 6px; }
.idbox {
  position: absolute;
  left: 756px;
  top: 536px;
  width: 253px;
  height: 24px;
  background: rgba(55, 55, 55, .58);
  color: rgba(255, 255, 255, .85);
  display: flex;
  align-items: center;
}
.id-text { margin-left: 9px; font: 12.700px "Liberation Sans", sans-serif; white-space: nowrap; position: relative; }
.black-chip { position: absolute; left: 124px; top: 3px; width: 11px; height: 8px; background: #111; }
.none-chip { position: absolute; left: 18px; top: 2px; width: 10px; height: 9px; background: linear-gradient(to top right, transparent 44%, #d33 46% 54%, transparent 56%); }
.redblue { position: absolute; left: 1008px; top: 540px; width: 12px; height: 11px; }
.topshadow { position: absolute; left: 702px; top: 0; width: 160px; height: 1px; background: #b4b4b4; }
</style>
